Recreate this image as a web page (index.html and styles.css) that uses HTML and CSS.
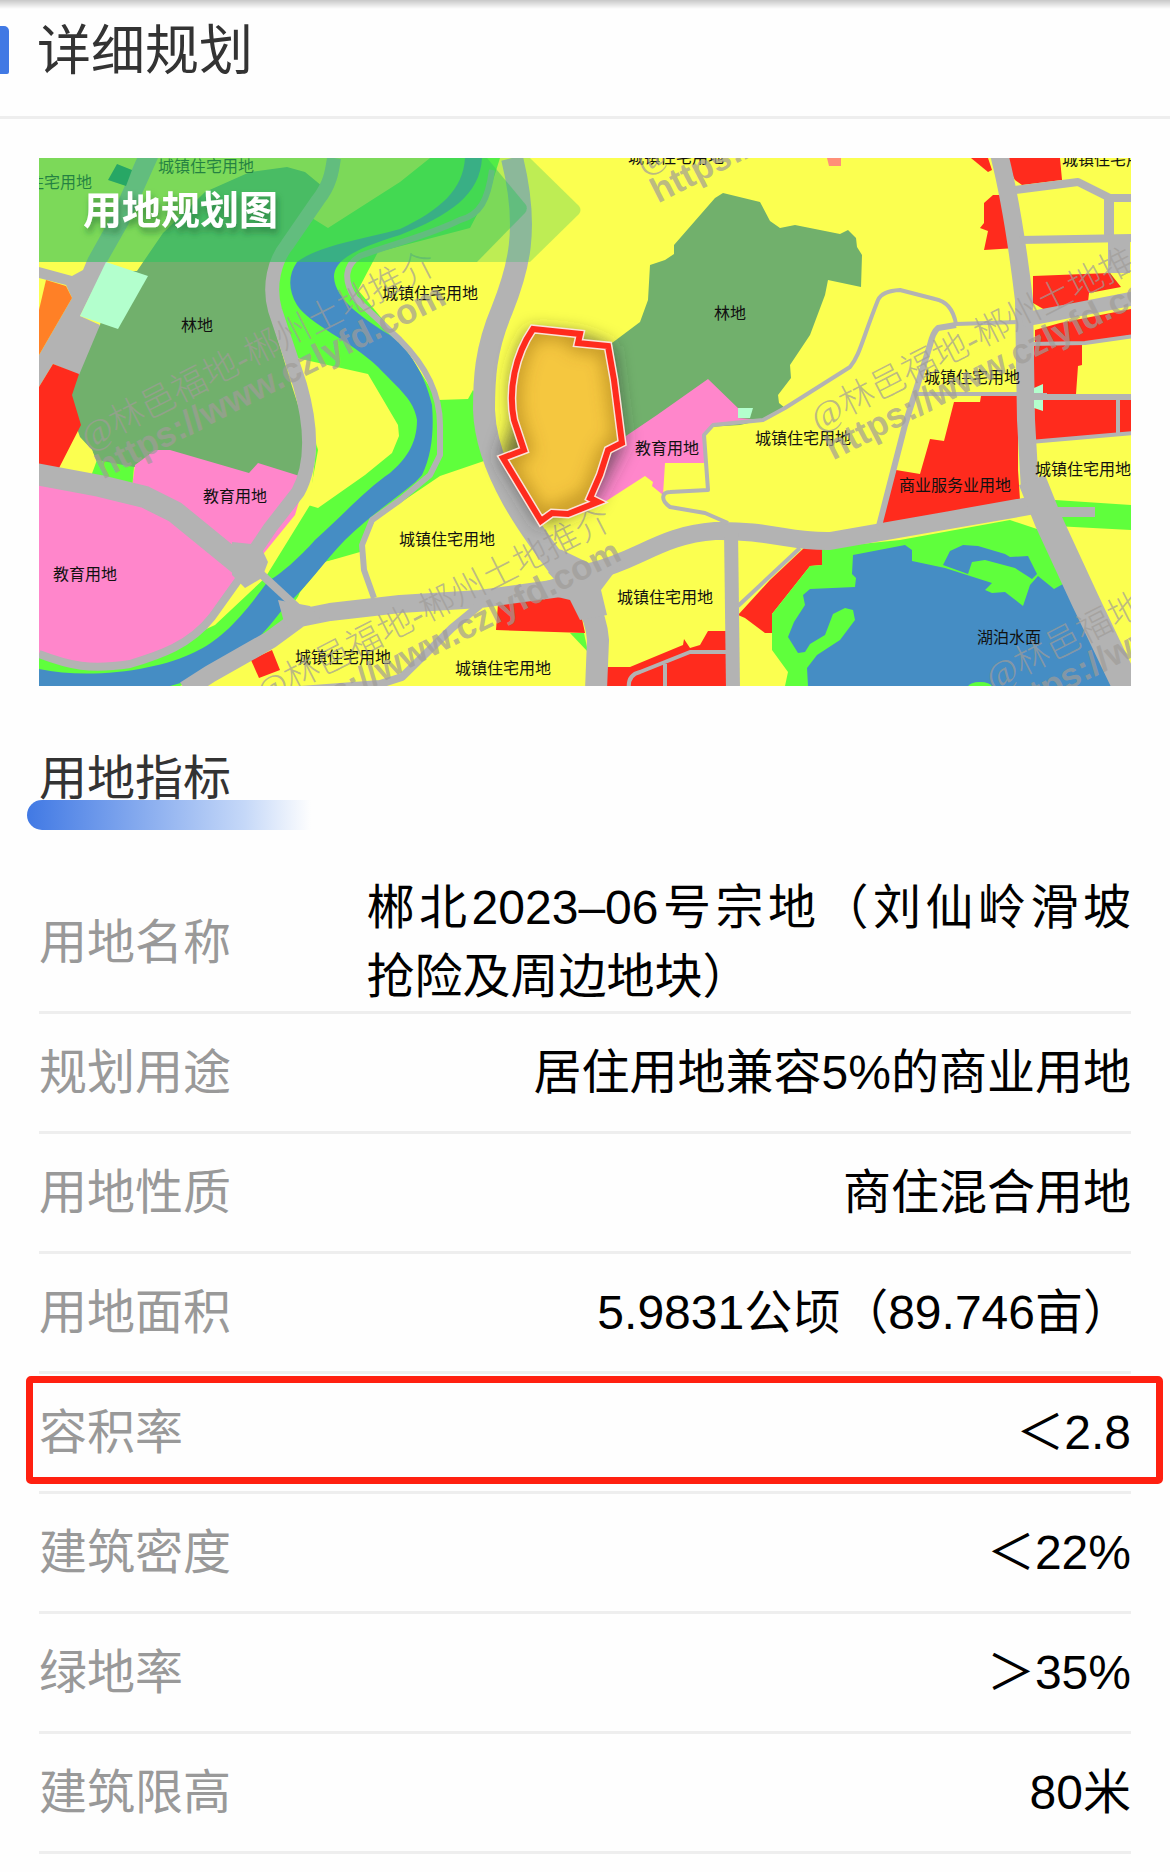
FILE: index.html
```
<!DOCTYPE html>
<html lang="zh-CN">

<head>
  <meta charset="UTF-8">
  <meta name="viewport" content="width=device-width, initial-scale=1.0">
  <title>详细规划</title>
  <link rel="stylesheet" href="styles.css">
</head>

<body>
  <header class="page-header">
    <h1>详细规划</h1>
  </header>

  <main class="content">
    <svg class="plan-map" viewBox="39 158 1092 528" role="img" aria-label="用地规划图">
      <defs>
        <filter id="plotShadow" x="-40%" y="-30%" width="180%" height="160%">
          <feGaussianBlur stdDeviation="9" />
        </filter>
        <filter id="titleShadow" x="-10%" y="-30%" width="120%" height="180%">
          <feDropShadow dx="2" dy="5" stdDeviation="3" flood-color="#226633" flood-opacity="0.6" />
        </filter>
        <clipPath id="plotClip">
          <use href="#plot" />
        </clipPath>
        <g id="mark">
          <g transform="rotate(-27)">
            <text class="mark-name" x="0" y="0">@林邑福地-郴州土地推介</text>
            <text class="mark-url" x="0" y="33">https://www.czlyfd.com</text>
          </g>
        </g>
      </defs>

      <rect class="yellow" x="39" y="158" width="1092" height="528" />

      <!-- green belt along the river -->
      <path class="lime" d="M500,158 H430 L400,182 328,228 312,218 278,262 272,290 295,370 318,430 310,505 265,578 215,625 150,655 39,650 V686 H180 L232,660 286,626 300,592 325,562 360,552 375,520 440,476 484,461 484,405 473,390 468,399 438,400 400,340 358,290 378,252 470,228 490,190Z" />
      <path class="yellow" d="M292,357 L368,374 398,425 399,436 392,453 365,475 318,508 308,505 318,450Z" />
      <path class="yellow" d="M356,555 L325,562 294,602 300,610 366,600Z" />

      <!-- woodland -->
      <path class="wood" d="M137,271 L163,233 205,192 250,172 287,167 305,172 322,186 300,220 275,258 268,290 275,330 290,380 306,430 308,478 258,490 155,470 134,467 112,467 97,462 92,450 80,437 60,380 100,325 115,271Z" />
      <path class="wood" d="M612,343 L640,322 648,300 650,265 665,260 674,254 674,245 715,198 723,193 760,202 770,221 780,228 795,225 840,234 848,230 856,238 857,247 862,255 861,287 828,280 825,295 810,335 790,365 791,378 778,395 779,403 785,408 770,418 740,425 660,430 618,450Z" />

      <!-- river -->
      <path class="water" d="M465,158 C463,190 440,210 400,229 C360,240 320,245 297,262 C288,275 288,290 297,305 C310,325 350,340 378,367 C400,390 414,400 417,420 C417,445 405,460 390,473 C365,490 340,518 315,540 C300,557 280,575 268,581 C240,620 220,640 195,652 C160,670 90,680 39,669 V686 H170 C230,672 260,640 285,606 C305,590 325,560 345,540 C375,510 410,490 422,475 C432,455 434,430 432,405 C425,375 410,350 390,335 C365,320 335,300 334,277 C334,262 350,250 400,235 C450,215 480,195 482,158Z" />

      <!-- education -->
      <path class="pink" d="M132,487 L135,465 155,450 170,450 249,473 258,463 306,478 295,515 260,558 240,560 170,510Z" />
      <path class="pink" d="M39,476 L130,492 170,510 240,575 212,620 185,640 130,667 85,668 39,654Z" />
      <path class="pink" d="M708,379 L740,410 738,418 763,420 713,425 705,433 705,463 665,463 663,495 652,486 653,482 645,476 600,505 590,490 620,440 657,415Z" />

      <!-- small plots on the left -->
      <path class="yellow" d="M76,435 L92,450 95,460 90,479 59,472Z" />
      <path class="lime" d="M97,460 L134,467 132,489 90,479Z" />
      <path class="road-fill" d="M137,158 H158 L128,225 107,262 80,316 100,325 79,375 53,364 39,387 V355 L72,298 66,285 39,278 V267 L72,276 83,270 88,258 112,215Z" />
      <path class="orange" d="M46,280 L66,286 72,298 39,355 39,310Z" />
      <path class="red" d="M53,364 L79,374 72,395 81,425 58,470 39,466 39,387Z" />
      <path class="mint" d="M106,262 L148,276 118,329 80,316Z" />
      <path class="teal" d="M117,164 L132,170 126,186 108,180Z" />
      <path class="red" d="M251,660 L272,650 280,670 259,678Z" />

      <!-- commercial -->
      <path class="red" d="M498,604 L560,594 578,600 585,633 496,630Z" />
      <path class="lime" d="M570,633 L584,633 588,652Z" />
      <path class="red" d="M605,667 L630,667 683,645 684,639 690,648 700,645 708,631 727,631 727,686 600,686Z" />
      <path class="red" d="M804,548 L822,548 822,565 810,566 772,614 772,633 765,633 745,618 738,615 770,580Z" />
      <path class="red" d="M954,402 L980,402 981,396 1018,396 1018,470 1020,500 1015,506 940,517 880,527 896,470 920,474 930,439 944,441Z" />
      <path class="red" d="M1003,158 L1060,158 1062,180 1022,185 1015,180Z" />
      <path class="red" d="M971,158 L988,158 992,170 988,172Z" />
      <path class="red" d="M1005,195 L993,195 984,203 984,223 980,228 988,231 984,250 1016,248Z" />
      <path class="red" d="M1033,276 L1110,273 1121,287 1089,293 1088,302 1045,310 1033,303Z" />
      <path class="red" d="M1035,330 L1060,323 1131,309 1131,335 1090,342 1035,342Z" />
      <path class="red" d="M1034,345 L1082,345 1082,365 1078,366 1076,394 1034,394Z" />
      <path class="red" d="M1034,400 L1131,400 1131,432 1034,441Z" />
      <path class="salmon" d="M827,158 H841 V166 H829Z" />

      <!-- lake -->
      <path class="lime" d="M1055,500 L1131,505 1131,530 1055,526Z" />
      <path class="lime" d="M822,548 L900,540 1010,520 1040,530 1060,570 1118,686 785,686 788,672 772,650 772,614 810,566 822,565Z" />
      <path class="water" d="M853,555 L905,545 912,550 912,561 945,568 992,583 985,590 992,593 1005,592 1023,606 1030,585 1038,576 1054,589 1063,584 1080,610 1112,686 808,686 807,668 817,655 840,640 855,620 853,610 845,608 833,614 825,635 810,644 805,652 798,653 788,637 794,622 805,605 803,595 810,589 855,587 856,578 852,574Z" />
      <path class="water" d="M943,565 L950,551 963,545 978,546 1005,554 1010,557 1028,556 1037,574 1032,579 1015,568 985,560 972,562 968,574Z" />
      <ellipse class="lime" cx="980" cy="687" rx="12" ry="5" />

      <!-- roads -->
      <g class="road">
        <path class="w22" d="M512,158 C530,230 518,270 502,310 C485,350 484,380 484,410 C486,470 530,530 565,575" />
        <path class="w22" d="M556,565 C580,590 596,610 598,640 L596,690" />
        <path class="w18" d="M590,575 L560,588 480,599 400,604 330,612 300,618 270,640 210,674 185,690" />
        <path class="w22" d="M30,473 L100,486 145,497 175,512 240,565" />
        <path class="w14" d="M245,565 L270,528 298,492 C315,460 310,420 300,385 L275,310 C268,285 275,260 287,245 L318,200 C330,185 332,172 334,158" />
        <path class="w8" d="M235,550 L300,610" />
        <path class="w8" d="M242,575 L212,617 C190,645 160,655 130,664 C90,670 70,666 39,654" />
        <path class="w6" d="M492,170 C488,200 480,215 460,220 C430,235 390,245 360,256 C345,265 343,280 355,298 L400,340 C430,370 440,400 440,425 L440,455 430,475 400,500 372,520 362,545 364,570 374,598" />
        <path class="w8" d="M300,690 L380,684 402,677 452,628 480,605" />
        <path class="w18" d="M590,572 C640,560 660,535 715,531 C770,530 790,542 830,541 L950,520 1035,505" />
        <path class="w14" d="M731,530 L733,690" />
        <path class="w4" d="M738,606 L800,548" />
        <path class="w4" d="M728,523 L705,513 670,507 C660,500 662,492 670,492 L708,490 704,435 713,425 763,420 785,408 850,367 C860,355 862,340 878,300 Q882,291 900,290 L935,299 Q952,302 956,324 L1020,322" />
        <path class="w6" d="M956,325 L938,328 Q933,332 930,345 L905,425 878,530" />
        <path class="w4" d="M915,394 H1020" />
        <path class="w18" d="M998,150 C1010,195 1018,250 1024,300 L1026,420 1030,490" />
        <path class="w28" d="M1032,480 L1048,520 1085,600 1128,690" />
        <path class="w8" d="M1015,190 L1078,182 1110,198 H1135" />
        <path class="w10" d="M1109,198 V240" />
        <path class="w8" d="M1020,240 L1135,238" />
        <path class="w22" d="M1119,240 V273" />
        <path class="w14" d="M1022,320 L1080,309 1135,298" />
        <path class="w4" d="M1030,344 L1085,343 1135,336" />
        <path class="w6" d="M1026,397 H1135" />
        <path class="w4" d="M1118,398 V434" />
        <path class="w4" d="M1030,442 L1135,433" />
        <path class="w10" d="M1050,512 H1095" />
        <path class="w4" d="M629,690 Q627,675 640,672 L690,652 726,652" />
        <path class="w4" d="M665,664 V690" />
      </g>
      <path class="road-fill" d="M232,542 L260,545 268,562 262,578 245,588 232,575Z" />
      <path class="road-fill" d="M540,545 L562,550 595,566 625,558 601,590 607,615 580,620 570,600 545,594 540,583 556,578Z" />
      <path class="road-fill" d="M278,600 L310,606 320,618 290,632 284,622Z" />
      <path class="mint" d="M1034,388 L1043,384 V411 L1034,408Z" />
      <path class="road-fill" d="M1033,393 h14 v7 h-14z" />
      <path class="mint" d="M738,408 H753 L750,418 H738Z" />

      <!-- zone names -->
      <g class="zone">
        <text x="28" y="188">住宅用地</text>
        <text x="158" y="172">城镇住宅用地</text>
        <text x="382" y="299">城镇住宅用地</text>
        <text x="181" y="331">林地</text>
        <text x="203" y="502">教育用地</text>
        <text x="53" y="580">教育用地</text>
        <text x="399" y="545">城镇住宅用地</text>
        <text x="617" y="603">城镇住宅用地</text>
        <text x="455" y="674">城镇住宅用地</text>
        <text x="295" y="663">城镇住宅用地</text>
        <text x="628" y="163">城镇住宅用地</text>
        <text x="714" y="319">林地</text>
        <text x="635" y="454">教育用地</text>
        <text x="755" y="444">城镇住宅用地</text>
        <text x="924" y="383">城镇住宅用地</text>
        <text x="1035" y="475">城镇住宅用地</text>
        <text x="1062" y="165">城镇住宅用地</text>
        <text x="899" y="491">商业服务业用地</text>
        <text x="977" y="643">湖泊水面</text>
      </g>

      <!-- watermark -->
      <use href="#mark" x="88" y="450" />
      <use href="#mark" x="818" y="431" />
      <use href="#mark" x="263" y="706" />
      <use href="#mark" x="643" y="174" />
      <use href="#mark" x="993" y="691" />

      <!-- selected plot -->
      <path class="plot-shadow" filter="url(#plotShadow)" d="M531,330 L581,335 612,347 624,443 594,502 541,525 500,458 514,420 C508,390 513,355 531,330Z" />
      <path id="plot" class="plot" d="M533,329 L580,334 578,343 608,346 614,380 622,443 608,450 600,475 590,498 598,502 568,514 552,513 541,521 503,458 524,450 514,420 C508,390 515,355 533,329Z" />
      <path class="plot-inner" clip-path="url(#plotClip)" filter="url(#plotShadow)" d="M533,329 L580,334 578,343 608,346 614,380 622,443 608,450 590,498 541,521 503,458 524,450 514,420 C508,390 515,355 533,329Z" />
      <use href="#plot" class="plot-edge" />
      <use href="#plot" class="plot-line" />

      <!-- banner -->
      <path class="banner-back" d="M39,158 H530 L579,206 Q582,210 579,214 L530,262 H39Z" />
      <path class="banner-front" d="M39,158 H487 L526,205 Q528,209 525,213 L477,262 H39Z" />
      <text class="banner-title" x="83" y="224" filter="url(#titleShadow)">用地规划图</text>
    </svg>

    <h2 class="section-title"><span>用地指标</span></h2>

    <table class="index-table">
      <tr>
        <th scope="row">用地名称</th>
        <td class="long">郴北2023–06号宗地（刘仙岭滑坡<span>抢险及周边地块）</span></td>
      </tr>
      <tr>
        <th scope="row">规划用途</th>
        <td>居住用地兼容5%的商业用地</td>
      </tr>
      <tr>
        <th scope="row">用地性质</th>
        <td>商住混合用地</td>
      </tr>
      <tr>
        <th scope="row">用地面积</th>
        <td>5.9831公顷（89.746亩）</td>
      </tr>
      <tr class="marked">
        <th scope="row">容积率</th>
        <td>＜2.8</td>
      </tr>
      <tr>
        <th scope="row">建筑密度</th>
        <td>＜22%</td>
      </tr>
      <tr>
        <th scope="row">绿地率</th>
        <td>＞35%</td>
      </tr>
      <tr>
        <th scope="row">建筑限高</th>
        <td>80米</td>
      </tr>
    </table>
  </main>
</body>

</html>
```
FILE: styles.css
```
* {
  box-sizing: border-box;
}

body {
  margin: 0;
  background-color: #fefefe;
  color: #000;
  font-family: "Liberation Sans", "Noto Sans CJK SC", sans-serif;
}

.page-header {
  display: flex;
  align-items: flex-start;
  padding: 12px 0 26px;
  border-bottom: 3px solid #eee;
  background-image: linear-gradient(#c8c8c8, #fefefe);
  background-size: 100% 9px;
  background-repeat: no-repeat;
}

.page-header::before {
  content: "";
  width: 9px;
  height: 48px;
  margin-top: 14px;
  border-radius: 0 5px 2px 0;
  background-color: #4179e4;
}

h1 {
  margin: 0 0 0 28px;
  color: #333;
  font-size: 54px;
  font-weight: 400;
  line-height: 78px;
}

.content {
  padding: 39px 39px 0;
}

/* Plan map */
.plan-map {
  display: block;
  width: 100%;
}

.yellow {
  fill: #fbff50;
}

.lime {
  fill: #5fff3c;
}

.wood {
  fill: #71b06c;
}

.water {
  fill: #458dc4;
}

.pink {
  fill: #ff86cb;
}

.red {
  fill: #ff2b1d;
}

.orange {
  fill: #ff8026;
}

.salmon {
  fill: #ff9078;
}

.mint {
  fill: #b3ffcd;
}

.teal {
  fill: #15786f;
}

.road-fill {
  fill: #b3b3b3;
}

.road {
  fill: none;
  stroke: #b3b3b3;
  stroke-linejoin: round;
}

.w4 {
  stroke-width: 4px;
}

.w6 {
  stroke-width: 6px;
}

.w8 {
  stroke-width: 8px;
}

.w10 {
  stroke-width: 10px;
}

.w14 {
  stroke-width: 14px;
}

.w18 {
  stroke-width: 18px;
}

.w22 {
  stroke-width: 22px;
}

.w28 {
  stroke-width: 28px;
}

.zone {
  fill: #111;
  font-size: 16px;
}

.mark-name,
.mark-url {
  fill: #a09c98;
  fill-opacity: 0.7;
  font-size: 35px;
}

.mark-name {
  font-family: "Liberation Serif", "Noto Sans CJK SC", serif;
  font-weight: 300;
}

.mark-url {
  font-weight: bold;
}

.plot-shadow {
  fill: #333;
  fill-opacity: 0.7;
}

.plot {
  fill: #f5c73f;
}

.plot-inner {
  fill: none;
  stroke: #7a5200;
  stroke-width: 14px;
  stroke-opacity: 0.5;
}

.plot-edge {
  stroke: #fbe3da;
  stroke-width: 9px;
  fill-opacity: 0;
}

.plot-line {
  stroke: #ff2b1d;
  stroke-width: 6px;
  fill-opacity: 0;
}

.banner-back {
  fill: #32c35f;
  fill-opacity: 0.3;
}

.banner-front {
  fill: #32c35f;
  fill-opacity: 0.47;
}

.banner-title {
  fill: #fff;
  font-size: 39px;
  font-weight: bold;
}

/* Indicators */
.section-title {
  position: relative;
  margin: 57px 0 43px;
  color: #333;
  font-size: 48px;
  font-weight: 400;
  line-height: 72px;
  padding-bottom: 15px;
}

.section-title::before {
  content: "";
  position: absolute;
  left: -12px;
  bottom: 0;
  width: 290px;
  height: 30px;
  border-radius: 15px 0 0 15px;
  background-image: linear-gradient(to right, #4179e4, #c5d8f8 75%, #fefefe 98%);
}

.section-title span {
  position: relative;
}

.index-table {
  width: 100%;
  border-collapse: collapse;
  font-size: 48px;
  line-height: 69px;
}

.index-table tr {
  position: relative;
  height: 120px;
  border-bottom: 3px solid #eee;
}

.index-table th {
  width: 30%;
  padding: 0;
  color: #999;
  font-weight: 400;
  text-align: left;
}

.index-table td {
  padding: 0;
  text-align: right;
}

.index-table .long {
  text-align: justify;
}

.long span {
  white-space: nowrap;
}

.marked::after {
  content: "";
  position: absolute;
  top: 3px;
  right: -32px;
  bottom: 6px;
  left: -13px;
  border: 7px solid #ff2010;
  border-radius: 5px;
}
```
